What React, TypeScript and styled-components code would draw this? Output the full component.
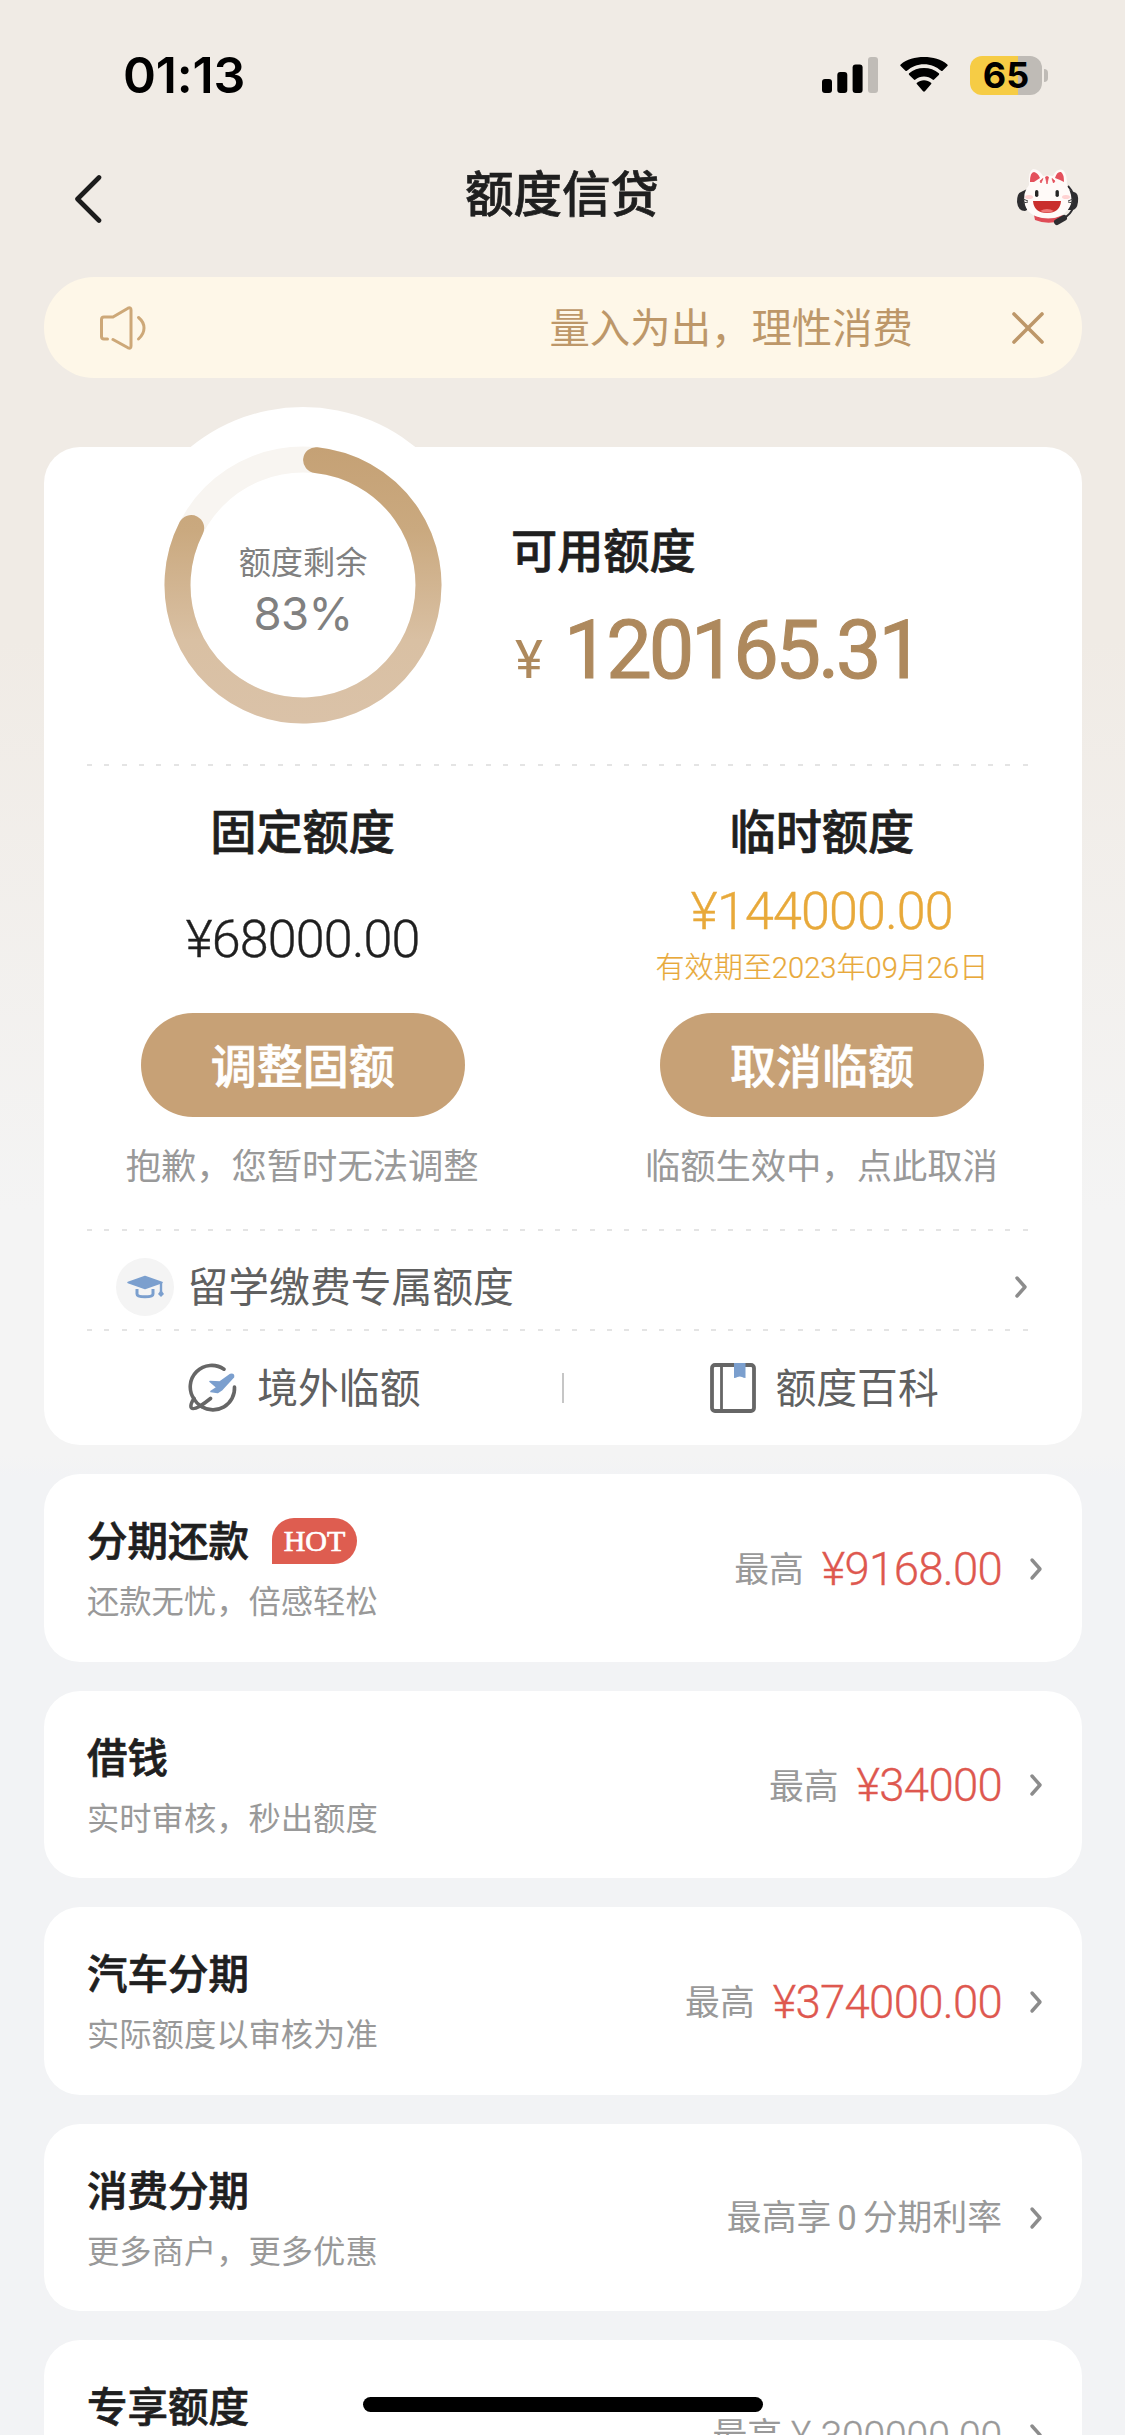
import React from "react";
import styled, { createGlobalStyle } from "styled-components";

const CJK = '"Noto Sans CJK SC", sans-serif';
const NUM = 'Roboto, "Noto Sans CJK SC", sans-serif';

const GlobalStyle = createGlobalStyle`
  * { box-sizing: border-box; }
  body { margin: 0; background: #f2f3f5; }
`;

const Screen = styled.div`
  width: 1125px;
  height: 2435px;
  overflow: hidden;
  position: relative;
  display: flex;
  flex-direction: column;
  font-family: ${CJK};
  color: #1f1f1f;
  background: linear-gradient(180deg, #f0ebe5 0, #f0ebe5 640px, #f4f4f4 1210px, #f4f4f4 1455px, #f2f3f5 1475px);
`;

const StatusBar = styled.div`
  height: 150px;
  flex: none;
  display: flex;
  align-items: center;
  justify-content: space-between;
  padding: 0 77px 0 123px;
`;

const Clock = styled.div`
  font: 600 50px/60px Inter, sans-serif;
  letter-spacing: -0.2px;
  color: #000;
`;

const StatusIcons = styled.div`
  display: flex;
  align-items: center;
`;

const Battery = styled.div`
  width: 72px;
  height: 39px;
  margin-left: 21px;
  border-radius: 12px;
  background: linear-gradient(90deg, #f6cc45 0, #f6cc45 48px, #bfbbb6 48px);
  font: 700 36px/39px Inter, sans-serif;
  text-align: center;
  color: #000;
`;

const BatteryNub = styled.div`
  width: 4px;
  height: 13px;
  margin-left: 2px;
  border-radius: 0 4px 4px 0;
  background: #bfbbb6;
`;

const Header = styled.div`
  height: 96px;
  flex: none;
  display: grid;
  grid-template-columns: 62px 1fr 62px;
  align-items: center;
  padding: 0 46px 0 45px;
`;

const BackButton = styled.div`
  padding: 2px 0 0 29px;
  line-height: 0;
`;

const Title = styled.h1`
  margin: 0;
  padding-bottom: 14px;
  text-align: center;
  font-size: 48.5px;
  line-height: 60px;
  font-weight: 500;
  -webkit-text-stroke: 0.7px currentColor;
`;

const Notice = styled.div`
  height: 101px;
  flex: none;
  margin: 31px 43px 0 43.5px;
  padding: 0 37px 0 56.5px;
  border-radius: 50px;
  background: #fef7e8;
  display: flex;
  align-items: center;
`;

const NoticeText = styled.div`
  flex: 1;
  padding: 0 98px 3px 0;
  text-align: right;
  font-size: 40.4px;
  line-height: 60px;
  color: #bd9769;
`;

const Card = styled.section`
  flex: none;
  height: 998px;
  margin: 69px 43px 0 43.5px;
  border-radius: 36px;
  background: #fff;
  display: flex;
  flex-direction: column;
`;

const Summary = styled.div`
  height: 317px;
  display: flex;
`;

const Gauge = styled.div`
  width: 356px;
  height: 356px;
  margin: -40px 0 0 81.5px;
  border-radius: 50%;
  background: #fff;
  display: grid;
  place-items: center;
  > * { grid-area: 1 / 1; }
`;

const GaugeLabel = styled.div`
  text-align: center;
  font-size: 32.2px;
  line-height: 44px;
  color: #808080;
  padding-top: 10px;
`;

const GaugeValue = styled.div`
  margin-top: 3px;
  text-align: center;
  font: 400 45.5px/58px Inter, sans-serif;
  letter-spacing: -0.6px;
  color: #808080;
`;

const Available = styled.div`
  padding: 71px 0 0 30px;
`;

const Heading = styled.h2`
  margin: 0;
  font-size: 46.2px;
  line-height: 60px;
  font-weight: 500;
  -webkit-text-stroke: 0.7px currentColor;
`;

const BigAmount = styled.div`
  display: flex;
  align-items: baseline;
  margin-top: 25px;
  font: 400 81px/96px ${NUM};
  letter-spacing: -3.2px;
  -webkit-text-stroke: 1.1px currentColor;
  color: #ae895d;
  small { font-size: 53px; width: 53px; padding-left: 4px; -webkit-text-stroke: 0; }
`;

const Dashes = styled.div`
  flex: none;
  height: 2px;
  margin: 0 54px 0 43px;
  background: repeating-linear-gradient(90deg, #e4e4e4 0, #e4e4e4 5px, transparent 5px, transparent 17.33px);
`;

const Limits = styled.div`
  height: 463px;
  display: grid;
  grid-template-columns: 1fr 1fr;
`;

const Limit = styled.div`
  display: flex;
  flex-direction: column;
  align-items: center;
  padding: 33px 1px 0 0;
`;

const LimitBody = styled.div<{ $raised?: boolean }>`
  height: 154px;
  padding: ${(p) => (p.$raised ? "0 0 2px" : "8px 0 0")};
  display: flex;
  flex-direction: column;
  align-items: center;
  justify-content: center;
`;

const LimitAmount = styled.div<{ $gold?: boolean }>`
  font: 300 52px/60px ${NUM};
  letter-spacing: -0.8px;
  -webkit-text-stroke: 0.4px currentColor;
  color: ${(p) => (p.$gold ? "#e8a93a" : "#1f1f1f")};
`;

const Expiry = styled.div`
  font: 300 29.1px/40px ${NUM};
  -webkit-text-stroke: 0.2px currentColor;
  color: #e8a93a;
  margin-top: 6px;
`;

const PillButton = styled.button`
  width: 324px;
  height: 104px;
  border: 0;
  padding: 0 0 5px;
  border-radius: 52px;
  background: #c7a176;
  color: #fff;
  font: 500 46px/60px ${CJK};
  -webkit-text-stroke: 0.7px currentColor;
`;

const Hint = styled.div`
  margin-top: 21px;
  padding-right: 1px;
  font-size: 35.3px;
  line-height: 52px;
  color: #999;
`;

const StudyRow = styled.div`
  height: 98px;
  display: flex;
  align-items: center;
  padding: 13px 54px 0 72px;
  justify-content: space-between;
`;

const IconLabel = styled.div<{ $gap: number }>`
  display: flex;
  align-items: center;
  gap: ${(p) => p.$gap}px;
  font-size: 40.8px;
  line-height: 60px;
  color: #606060;
  span { padding-bottom: 3px; }
`;

const Disc = styled.div`
  width: 58px;
  height: 58px;
  border-radius: 50%;
  background: #f4f4f4;
  line-height: 0;
`;

const Links = styled.div`
  flex: 1;
  display: grid;
  grid-template-columns: 1fr 1px 1fr;
  align-items: center;
  justify-items: center;
  padding-bottom: 1px;
  > div:first-child, > div:last-child { padding-left: 3px; }
`;

const Divider = styled.div`
  width: 2px;
  height: 30px;
  background: #c6c6c6;
`;

const List = styled.div`
  display: flex;
  flex-direction: column;
  gap: 29px;
  margin: 29px 43px 0 43.5px;
`;

const Item = styled.div`
  flex: none;
  height: 187.5px;
  border-radius: 36px;
  background: #fff;
  padding: 0 39px 0 43.5px;
  display: flex;
  justify-content: space-between;
`;

const ItemText = styled.div`
  padding-top: 36px;
`;

const ItemTitle = styled.div`
  display: flex;
  align-items: center;
  gap: 23px;
  height: 58px;
  font-size: 40.5px;
  line-height: 58px;
  font-weight: 500;
  -webkit-text-stroke: 0.7px currentColor;
`;

const Hot = styled.span`
  width: 85px;
  height: 46px;
  margin-top: 3px;
  border-radius: 22px 23px 23px 0;
  background: #de5d50;
  color: #fff;
  font: 400 30px/46px "Liberation Serif", serif;
  text-align: center;
`;

const ItemSub = styled.div`
  margin-top: 8px;
  font-size: 32.3px;
  line-height: 46px;
  color: #999;
`;

const ItemSide = styled.div`
  display: flex;
  align-items: center;
  padding-top: 2px;
`;

const SideText = styled.div`
  font-size: 34.8px;
  line-height: 52px;
  color: #999;
  margin-right: 27px;
  display: flex;
  align-items: center;
  > span:first-child { padding-bottom: 3px; }
`;

const Price = styled.span<{ $muted?: boolean }>`
  font: 300 ${(p) => (p.$muted ? 39 : 45.5)}px/52px ${NUM};
  letter-spacing: ${(p) => (p.$muted ? -0.1 : -0.7)}px;
  margin-left: ${(p) => (p.$muted ? 9 : 18)}px;
  padding-top: 2px;
  -webkit-text-stroke: 0.3px currentColor;
  color: ${(p) => (p.$muted ? "#999" : "#de584f")};
`;

const Zero = styled.span`
  font-family: ${NUM};
  padding: 0 6px;
`;

const HomeBar = styled.div`
  position: absolute;
  left: 363px;
  top: 2397px;
  width: 400px;
  height: 15px;
  border-radius: 8px;
  background: #000;
`;

const Chevron = () => (
  <svg width="14" height="24" viewBox="0 0 14 24" fill="none">
    <path d="M3 3 L11 12 L3 21" stroke="#8c8c8c" strokeWidth="3.400" strokeLinecap="round" strokeLinejoin="round" />
  </svg>
);

const Signal = () => (
  <svg width="56" height="36" viewBox="0 0 56 36">
    <rect x="0" y="22" width="10" height="14" rx="3" />
    <rect x="15.3" y="15" width="10" height="21" rx="3" />
    <rect x="30.6" y="7.500" width="10" height="28.500" rx="3" />
    <rect x="46" y="0" width="10" height="36" rx="3" fill="#c0bcb7" />
  </svg>
);

const WifiIcon = styled.svg`
  margin-left: 21px;
`;

const Wifi = () => (
  <WifiIcon width="50" height="36" viewBox="0 0 48 36" preserveAspectRatio="none">
    <path d="M24 7.200c6.300 0 12.100 2.500 16.400 6.600.4.400 1 .4 1.400 0l4.600-4.700c.5-.5.500-1.200 0-1.700C40.400 2.300 32.600 0 24 0S7.600 2.300 1.600 7.400c-.5.500-.5 1.200 0 1.700l4.600 4.700c.4.400 1 .4 1.400 0C11.900 9.700 17.700 7.200 24 7.200z" />
    <path d="M24 19.400c3.100 0 6 1.200 8.200 3.200.5.400 1.100.4 1.500 0l4.500-4.700c.5-.5.500-1.300 0-1.700C34.400 12.700 29.400 11 24 11s-10.400 1.700-14.200 5.200c-.5.400-.5 1.200 0 1.700l4.500 4.700c.4.400 1 .4 1.500 0 2.200-2 5.100-3.200 8.200-3.200z" />
    <path d="M24 23.200c-2.500 0-4.900.9-6.700 2.500-.5.400-.5 1.100 0 1.600l5.800 6.900c.5.600 1.300.6 1.800 0l5.800-6.900c.5-.5.500-1.200 0-1.600-1.800-1.600-4.200-2.500-6.700-2.500z" />
  </WifiIcon>
);

const Cat = () => (
  <svg width="62" height="60" viewBox="0 0 62 60">
    <path d="M10 21 L4 24 Q0 25 0 34 Q1 43 8 43 L10 42z" fill="#2e2d30" />
    <path d="M52 22 L57 24 Q62 25 61 34 Q60 42 55 42 L51 42z" fill="#2e2d30" />
    <path d="M51 18 Q55 22 56 27" stroke="#2e2d30" strokeWidth="2" fill="none" />
    <path d="M17 47 Q31 54 46 47 L43 53 Q30 57 18 52z" fill="#df4b56" />
    <path d="M12 17 Q11 3 16 1 Q22 1 26 8 Q31 7 36 8 Q40 0 46 2 Q50 5 50 18 Q56 27 54 36 Q49 50 31 50 Q12 50 8 37 Q5 25 12 17z" fill="#fffaf8" />
    <path d="M13 14 Q13 4 17 4 Q21 5 23 10 L17 14z" fill="#e4505c" />
    <path d="M38 10 Q40 3 44 4 Q47 6 47 14 L43 12z" fill="#e4505c" />
    <path d="M28.500 9 Q30 8 31.500 9 L30 16z M23 13 L26 10.500 L24 15z M35 10.500 L38 13 L36.500 15z" fill="#e4505c" stroke="#e4505c" strokeWidth="0.800" />
    <ellipse cx="12" cy="29" rx="4" ry="2" fill="#ffd2d2" />
    <ellipse cx="49" cy="29" rx="4" ry="2" fill="#ffd2d2" />
    <rect x="18" y="22" width="3.400" height="7" rx="1.700" fill="#252525" />
    <rect x="38.500" y="22" width="3.400" height="7" rx="1.700" fill="#252525" />
    <path d="M6 31 L11 33 M6 35 L11 34 M51 33 L56 31 M51 34 L56 35" stroke="#444" strokeWidth="1" />
    <path d="M16 33 H44 Q43 45 30 45 Q17 45 16 33z" fill="#c92e2c" />
    <path d="M23 43 Q30 39 37 43 Q30 46 23 43z" fill="#ef7777" />
    <path d="M56 40 Q54 46 47 50" stroke="#2e2d30" strokeWidth="2" fill="none" />
    <path d="M40 54 L47 50" stroke="#2e2d30" strokeWidth="6" strokeLinecap="round" />
  </svg>
);

const Speaker = () => (
  <svg width="46" height="44" viewBox="0 0 46 44" fill="none" stroke="#cda878" strokeWidth="3" strokeLinecap="round" strokeLinejoin="round">
    <path d="M7.500 33 H4 Q1.500 33 1.500 30.500 V13.500 Q1.500 11 4 11 H13 L28 2.200 Q31 1 31 4 V40 Q31 43 28 41.800 L13 33.500" />
    <path d="M38.500 11.500 Q44 16 44 22 Q44 28 38.500 33" />
  </svg>
);

const GradCap = () => (
  <svg width="58" height="58" viewBox="0 0 58 58">
    <path d="M12 24.500 L29 18.500 L46 24.500 L29 30.500 Z" fill="#7b9fce" stroke="#7b9fce" strokeWidth="1.500" strokeLinejoin="round" />
    <path d="M21 31 V36 Q21 38.800 29 38.800 Q37 38.800 37 36 V31" fill="none" stroke="#7b9fce" strokeWidth="3" />
    <path d="M45 24 V34" stroke="#7b9fce" strokeWidth="2.400" />
    <path d="M45 32 L48 36 L45 39 L42 36z" fill="#7b9fce" />
  </svg>
);

const Globe = () => (
  <svg width="50" height="50" viewBox="0 0 50 50" fill="none" stroke="#666" strokeWidth="3.600" strokeLinecap="round" strokeLinejoin="round">
    <path d="M36 6.200 A21.500 21.500 0 0 0 6 36" />
    <path d="M46.500 24 A21.500 21.500 0 0 1 13.500 43.500" />
    <path d="M6 35.500 Q1.500 42.500 3.500 45 Q7 48 22.500 35.500" />
    <path d="M6 36 Q8.500 40.500 13.500 43.500" />
    <path d="M22 18.500 L32 19 L42.500 11.500 Q46 10.500 45.500 14 L34 26.500 L29.500 29.500 L23 28.500 L29 24.500z" fill="#7b9fce" stroke="#7b9fce" strokeWidth="1.600" />
  </svg>
);

const Book = () => (
  <svg width="46" height="50" viewBox="0 0 46 50" fill="none">
    <rect x="2" y="2" width="42" height="46" rx="3" stroke="#666" strokeWidth="3.800" />
    <path d="M11.500 2 V48" stroke="#666" strokeWidth="2.800" />
    <path d="M24 0 H35.500 V15 Q33.500 15 32 14 Q29.800 13 27.500 14 Q26 15 24 15z" fill="#7b9fce" />
  </svg>
);

const gaugePoint = (deg: number) => {
  const a = (deg * Math.PI) / 180;
  return `${178 + 125.5 * Math.sin(a)} ${178 - 125.5 * Math.cos(a)}`;
};

const Ring = () => (
  <svg width="356" height="356" viewBox="0 0 356 356" fill="none">
    <defs>
      <linearGradient id="ring" gradientUnits="userSpaceOnUse" x1="0" y1="40" x2="0" y2="316">
        <stop offset="0" stopColor="#c5a175" />
        <stop offset="0.300" stopColor="#caa97f" />
        <stop offset="0.700" stopColor="#d9c0a3" />
        <stop offset="1" stopColor="#dac2a8" />
      </linearGradient>
    </defs>
    <circle cx="178" cy="178" r="125.500" stroke="#f8f5f1" strokeWidth="26" />
    <path d={`M${gaugePoint(6)} A125.500 125.500 0 1 1 ${gaugePoint(297)}`} stroke="url(#ring)" strokeWidth="26" strokeLinecap="round" />
  </svg>
);

type Product = { title: string; sub: string; hot?: boolean; side: React.ReactNode };

const products: Product[] = [
  { title: "分期还款", sub: "还款无忧，倍感轻松", hot: true, side: <><span>最高</span><Price>¥9168.00</Price></> },
  { title: "借钱", sub: "实时审核，秒出额度", side: <><span>最高</span><Price>¥34000</Price></> },
  { title: "汽车分期", sub: "实际额度以审核为准", side: <><span>最高</span><Price>¥374000.00</Price></> },
  { title: "消费分期", sub: "更多商户，更多优惠", side: <span>最高享<Zero>0</Zero>分期利率</span> },
  { title: "专享额度", sub: "", side: <><span>最高</span><Price $muted>¥ 300000.00</Price></> },
];

export default function App() {
  return (
    <Screen>
      <GlobalStyle />
      <StatusBar>
        <Clock>01:13</Clock>
        <StatusIcons>
          <Signal />
          <Wifi />
          <Battery>65</Battery>
          <BatteryNub />
        </StatusIcons>
      </StatusBar>
      <Header>
        <BackButton>
          <svg width="28" height="50" viewBox="0 0 28 50" fill="none">
            <path d="M25 3.500 L3.500 25 L25 46.500" stroke="#1c1c1c" strokeWidth="4.600" strokeLinecap="round" strokeLinejoin="round" />
          </svg>
        </BackButton>
        <Title>额度信贷</Title>
        <Cat />
      </Header>
      <Notice>
        <Speaker />
        <NoticeText>量入为出，理性消费</NoticeText>
        <svg width="34" height="34" viewBox="0 0 34 34">
          <path d="M3 3 L31 31 M31 3 L3 31" stroke="#bd9769" strokeWidth="3.600" strokeLinecap="round" />
        </svg>
      </Notice>
      <Card>
        <Summary>
          <Gauge>
            <Ring />
            <div>
              <GaugeLabel>额度剩余</GaugeLabel>
              <GaugeValue>83%</GaugeValue>
            </div>
          </Gauge>
          <Available>
            <Heading>可用额度</Heading>
            <BigAmount><small>¥</small>120165.31</BigAmount>
          </Available>
        </Summary>
        <Dashes />
        <Limits>
          <Limit>
            <Heading>固定额度</Heading>
            <LimitBody>
              <LimitAmount>¥68000.00</LimitAmount>
            </LimitBody>
            <PillButton>调整固额</PillButton>
            <Hint>抱歉，您暂时无法调整</Hint>
          </Limit>
          <Limit>
            <Heading>临时额度</Heading>
            <LimitBody $raised>
              <LimitAmount $gold>¥144000.00</LimitAmount>
              <Expiry>有效期至2023年09月26日</Expiry>
            </LimitBody>
            <PillButton>取消临额</PillButton>
            <Hint>临额生效中，点此取消</Hint>
          </Limit>
        </Limits>
        <Dashes />
        <StudyRow>
          <IconLabel $gap={14}>
            <Disc><GradCap /></Disc>
            <span>留学缴费专属额度</span>
          </IconLabel>
          <Chevron />
        </StudyRow>
        <Dashes />
        <Links>
          <IconLabel $gap={19}><Globe /><span>境外临额</span></IconLabel>
          <Divider />
          <IconLabel $gap={20}><Book /><span>额度百科</span></IconLabel>
        </Links>
      </Card>
      <List>
        {products.map((p) => (
          <Item key={p.title}>
            <ItemText>
              <ItemTitle>{p.title}{p.hot && <Hot>HOT</Hot>}</ItemTitle>
              {p.sub && <ItemSub>{p.sub}</ItemSub>}
            </ItemText>
            <ItemSide>
              <SideText>{p.side}</SideText>
              <Chevron />
            </ItemSide>
          </Item>
        ))}
      </List>
      <HomeBar />
    </Screen>
  );
}
